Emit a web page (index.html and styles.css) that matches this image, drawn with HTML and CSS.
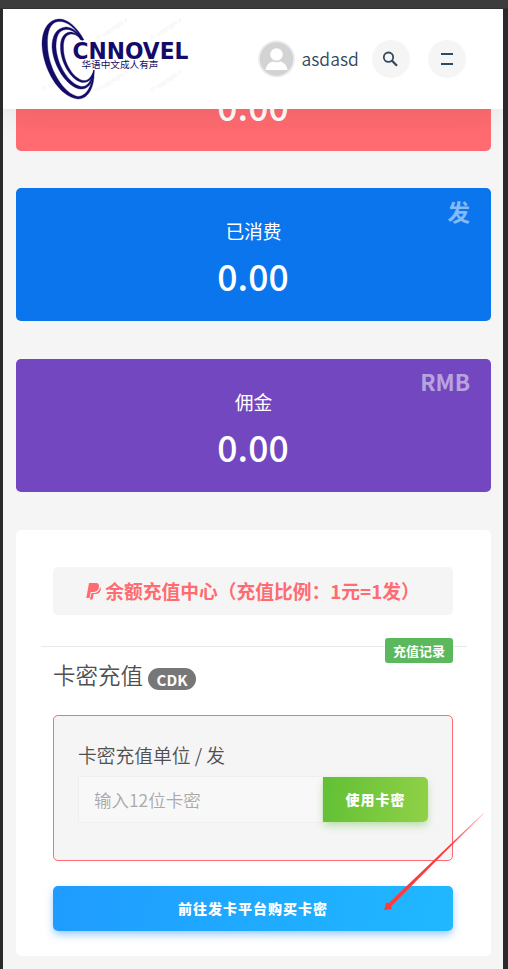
FILE: index.html
```html
<!DOCTYPE html>
<html lang="zh-CN">
<head>
<meta charset="utf-8">
<title>CNNOVEL</title>
<link rel="stylesheet" href="styles.css">
</head>
<body>
<div class="screen">
  <header class="header">
    <svg class="logo" width="152" height="90" viewBox="40 14 152 90" role="img">
      <g class="watermark">
        <text transform="translate(44 91) rotate(-32)">© copyright #</text>
        <text transform="translate(98 40) rotate(-32)">© copyright #</text>
        <text transform="translate(152 40) rotate(-32)">© copyright #</text>
        <text transform="translate(98 92) rotate(-32)">© copyright #</text>
        <text transform="translate(152 92) rotate(-32)">© copyright #</text>
      </g>
      <g fill="#130b68">
        <g stroke="#130b68" stroke-width=".35">
        <path d="M84 40C77 27 68 19 59 19C47 20 42 31 42 45C43 69 59 97 78 99C90 99 95 84 94 70C92 84 88 96 78 96.500C64 94 48 69 47.500 45C47 32 50 22 59 21.500C67 21 76 28 82 40Z"/>
        <path d="M83 40C78 31 71 27 66 27C56 28 52 36 52 47C53 66 67 87 80 89C89 90 94 81 94 70C91 81 88 87 81 86.500C69 84 57 65 56 47C56 36 59 30 66 29.500C73 29 78 35 81 40Z"/>
        <path d="M83 40C78 34 74 32 70 32C63 33 60 39 60.500 49C61 63 71 80 82 82.500C89 83 94 78 94 70C91 78 88 81 83 80.500C73 78 64 63 63.500 49C63 39 66 34.500 71 34C76 34 79 37 81 40Z"/>
        </g>
        <text class="wordmark" x="72.500" y="59" textLength="116" lengthAdjust="spacingAndGlyphs">CNNOVEL</text>
        <text class="tagline" x="81.500" y="68" textLength="77" lengthAdjust="spacingAndGlyphs">华语中文成人有声</text>
      </g>
    </svg>
    <div class="user">
      <svg class="avatar" width="38" height="38" viewBox="0 0 38 38">
        <circle cx="18.500" cy="19" r="18.500" fill="#ececec"/>
        <circle cx="18.500" cy="19" r="16.700" fill="#d3d3d3"/>
        <path d="M7.500 30C8.500 24 12.500 21 18.500 21S28.500 24 29.500 30Z" fill="#fff"/>
        <circle cx="18.500" cy="14.500" r="7" fill="#fff" stroke="#d3d3d3" stroke-width="1.500"/>
      </svg>
      <span>asdasd</span>
    </div>
    <div class="round search">
      <svg width="18" height="18" viewBox="0 0 18 18" fill="none" stroke="#34495e"><circle cx="6.500" cy="7.200" r="4.700" stroke-width="1.800"/><path d="M9.800 10.500L15 15.800" stroke-width="2.300"/></svg>
    </div>
    <div class="round menu"><i></i><i></i></div>
  </header>
  <main class="content">
    <section class="card red"><h3>余额</h3><p>0.00</p></section>
    <section class="card blue"><b class="unit">发</b><h3>已消费</h3><p>0.00</p></section>
    <section class="card purple"><b class="unit">RMB</b><h3>佣金</h3><p>0.00</p></section>
    <section class="panel">
      <div class="notice">
        <svg width="15" height="18" viewBox="0 0 15 18" fill="#ff6b70"><path d="M3 1H9.500C12.500 1 13.500 3 12.800 5.700C12 8.700 10 10 7 10H4.800L3.500 16H.3Z"/><path d="M14 5C15 6 14.900 7.200 14.500 8.500C13.800 11 12 12 9.500 12H7.700L6.500 17.500H3.800L5.600 11H7.500C11 11 13.500 9 14 5Z"/></svg>
        <span>余额充值中心（充值比例：1元=1发）</span>
      </div>
      <div class="divider"></div>
      <div class="title">
        <h2>卡密充值</h2><span class="pill">CDK</span>
        <a class="record">充值记录</a>
      </div>
      <div class="form">
        <label>卡密充值单位 / 发</label>
        <div class="row"><input type="text" placeholder="输入12位卡密"><button class="use">使用卡密</button></div>
      </div>
      <div class="buy">前往发卡平台购买卡密</div>
    </section>
  </main>
  <svg class="arrow" width="110" height="106" viewBox="380 810 110 106">
    <defs><linearGradient id="fade" gradientUnits="userSpaceOnUse" x1="484" y1="813" x2="450" y2="845"><stop stop-color="#ff3b3b" stop-opacity=".3"/><stop offset="1" stop-color="#fb3b3c"/></linearGradient></defs>
    <path d="M384 910L386.300 902.300L388.300 903.500L446 848.500L483.500 813L484 813.500L447 850L391 906.500L392 909Z" fill="url(#fade)"/>
  </svg>
</div>
</body>
</html>
```
FILE: styles.css
```css
* { box-sizing: border-box; }
body {
  margin: 0;
  height: 969px;
  overflow: hidden;
  padding: 9px 5px 0 3px;
  background: linear-gradient(#3c3c3c 0 8px, #292a2b 9px);
  font-family: "Noto Sans CJK SC", sans-serif;
  color: #505050;
}
.screen { position: relative; height: 960px; background: #f5f5f5; overflow: hidden; }
.header {
  position: relative;
  z-index: 2;
  display: flex;
  align-items: center;
  height: 100px;
  padding-left: 37px;
  background: #fff;
  box-shadow: 0 0 38px rgba(0, 0, 0, .1);
}
.logo { flex: none; overflow: visible; }
.watermark { font: 6px "Liberation Sans", sans-serif; fill: #f1f1f1; }
.wordmark { font: 700 22.5px "DejaVu Sans", sans-serif; }
.tagline { font: 400 9.6px "Noto Sans CJK SC", sans-serif; }
.user { display: flex; align-items: center; gap: 5.5px; width: 114px; margin-left: 66px; font-size: 17.5px; line-height: 38px; color: #34495e; font-weight: 350; }
.avatar { flex: none; }
.round { display: flex; align-items: center; justify-content: center; width: 38px; height: 38px; border-radius: 50%; background: #f5f5f5; }
.search { margin-right: 18px; }
.menu { flex-direction: column; gap: 8px; }
.menu i { width: 12px; height: 2px; background: #34495e; }
.content { padding: 0 12px 0 13px; margin-top: -91px; }
.card {
  position: relative;
  height: 133px;
  margin-bottom: 38px;
  padding-top: 29px;
  border-radius: 5px;
  color: #fff;
  text-align: center;
}
.red { background: #ff6b70; margin-bottom: 37px; }
.blue { background: #0a75ed; }
.purple { background: #7347c0; }
.card h3 { margin: 0; font-size: 18.75px; line-height: 28px; font-weight: 400; }
.card p { margin: 8px 0 0; padding-right: 1px; font-size: 35.5px; line-height: 45px; font-weight: 500; }
.unit { position: absolute; right: 21px; top: 5px; font-size: 22.5px; line-height: 34px; font-weight: 700; color: rgba(255, 255, 255, .5); }
.blue .unit { top: 6px; }
.panel { height: 426px; padding: 37px 38px 0 37px; background: #fff; border-radius: 5px; }
.notice { display: flex; align-items: center; justify-content: center; gap: 4px; height: 48px; border-radius: 5px; background: #f5f5f5; color: #ff6b70; font-size: 18.75px; font-weight: 700; line-height: 28px; white-space: nowrap; }
.divider { height: 1px; margin: 31px -14px 0 -12px; background: #e9e9e9; }
.title { position: relative; display: flex; height: 68px; }
.title h2 { margin: 10px 5px 0 0; font-size: 22.5px; line-height: 34px; font-weight: 350; }
.pill { height: 22px; width: 48px; margin-top: 21px; border-radius: 11px; background: #777; color: #fff; font-size: 15px; font-weight: 700; line-height: 24px; text-align: center; }
.record { position: absolute; right: 0; top: -9px; width: 68px; height: 25px; border-radius: 3px; background: #5cb85c; color: #fff; font-size: 13px; line-height: 25px; font-weight: 700; text-align: center; }
.form { height: 146px; padding: 25px 24px 0; border: 1px solid #ff6b70; border-radius: 5px; background: #f5f5f5; }
.form label { display: block; height: 35px; font-size: 18.75px; line-height: 28px; font-weight: 350; }
.row { display: flex; }
.row input { flex: 1; min-width: 0; height: 47px; padding: 0 15px; border: 1px solid #efefef; background: #f8f8f8; font: 350 17.5px "Noto Sans CJK SC", sans-serif; }
.row input::placeholder { color: #a9a9a9; }
.use { width: 105px; height: 45px; margin-top: 1px; padding: 0 0 2px; border: 0; border-radius: 0 5px 5px 0; background: linear-gradient(100deg, #60c034, #91d147); box-shadow: 0 4px 8px -1px rgba(96, 192, 52, .45); color: #fff; font: 900 14px "Noto Sans CJK SC", sans-serif; letter-spacing: 1px; }
.buy { height: 45px; margin-top: 25px; border-radius: 5px; background: linear-gradient(100deg, #1f9cff, #20b8ff); box-shadow: 0 4px 8px -1px rgba(31, 140, 255, .5); color: #fff; font-size: 14px; font-weight: 900; line-height: 45px; letter-spacing: 1px; text-align: center; }
.arrow { position: absolute; left: 377px; top: 801px; z-index: 3; }
```
